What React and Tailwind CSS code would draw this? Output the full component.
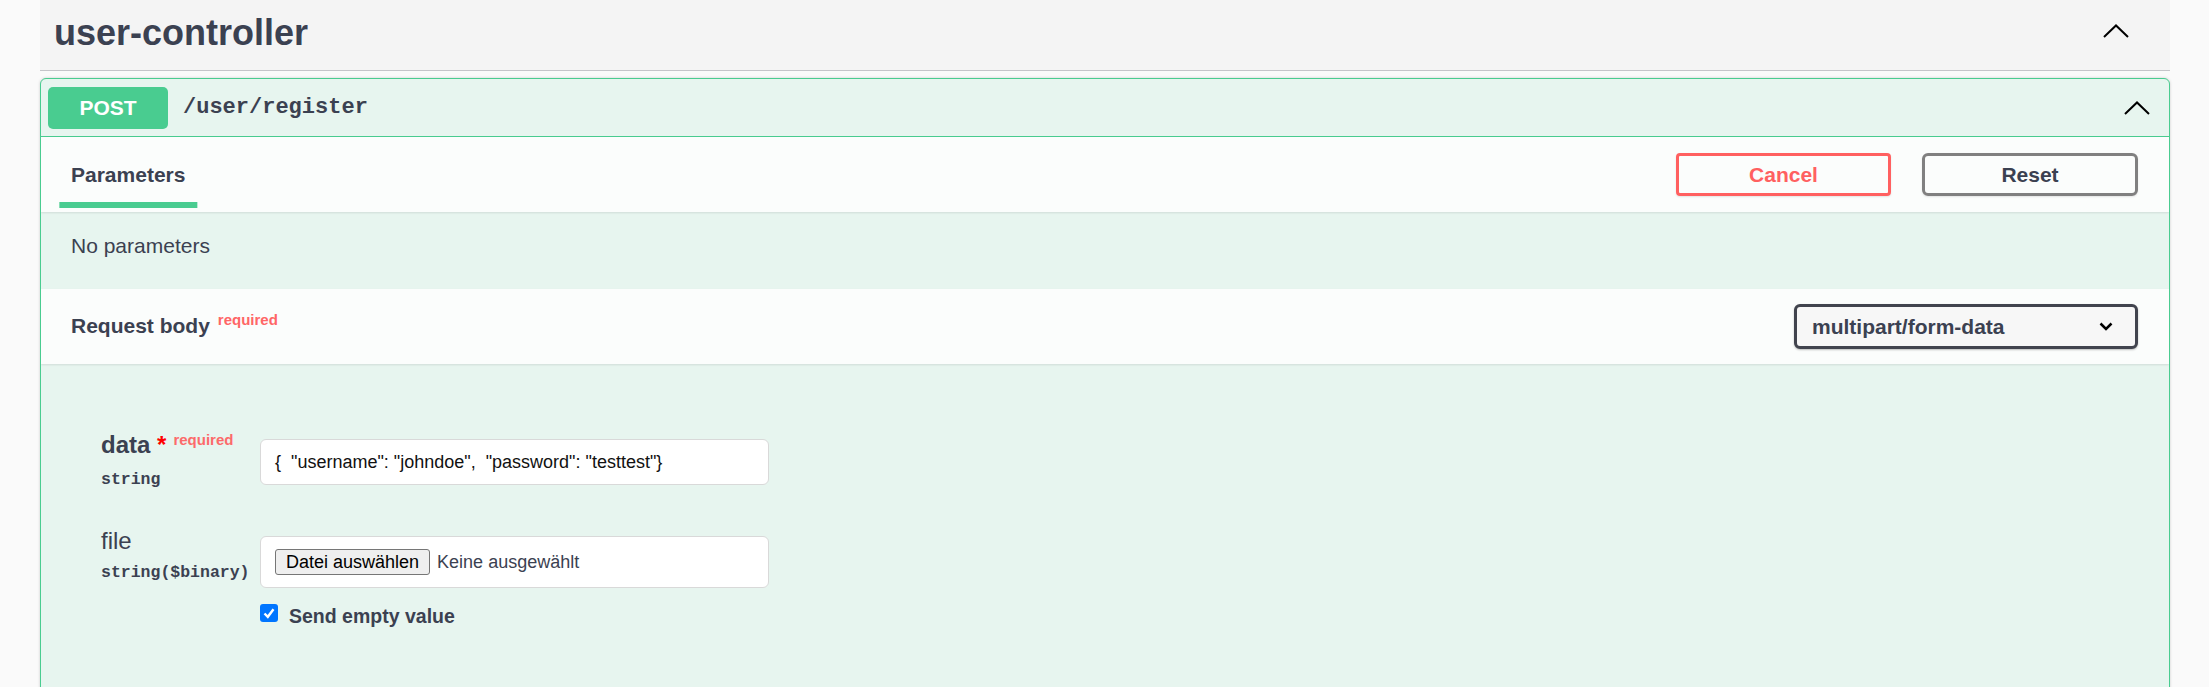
import React from 'react';

const Chevron = ({ className }) => (
  <svg width="26" height="14" viewBox="0 0 26 14" className={className}>
    <polyline points="1,13 13,1.5 25,13" fill="none" stroke="#000" strokeWidth="2" />
  </svg>
);

export default function App() {
  return (
    <div className="h-[687px] overflow-hidden bg-[#fafafa] font-['Liberation_Sans',Arial,sans-serif] text-[#3b4151]">
      <div className="ml-[40px] w-[2130px]">
        {/* tag header */}
        <div className="h-[71px] bg-[#f4f4f4] border-b border-[#c4c5c9] flex items-start justify-between pl-[14px] pt-[12px]">
          <h3 className="text-[36px] font-bold leading-[41px]">user-controller</h3>
          <Chevron className="mt-[12px] mr-[41px]" />
        </div>

        {/* operation block */}
        <div className="mt-[7px] h-[640px] border border-[#49cc90] rounded-[6px] bg-[#e7f5ef] shadow-[0_0_3px_rgba(0,0,0,0.19)] overflow-hidden">
          <div className="flex items-center pl-[7px] pr-[19px] pt-[8px] pb-[7px] border-b border-[#49cc90]">
            <span className="w-[120px] h-[42px] rounded-[5px] bg-[#49cc90] text-white font-bold text-[21px] flex items-center justify-center">POST</span>
            <span className="ml-[15px] font-['Liberation_Mono',monospace] font-bold text-[22px] leading-[26px]">/user/register</span>
            <Chevron className="ml-auto" />
          </div>

          {/* tab header */}
          <div className="relative h-[75px] bg-[#fbfdfc] shadow-[0_1px_2px_rgba(0,0,0,0.1)] flex items-center justify-between pl-[30px] pr-[31px]">
            <div className="relative">
              <h4 className="text-[21px] font-bold leading-[24px]">Parameters</h4>
              <div className="absolute left-1/2 -translate-x-1/2 top-[39px] w-[120%] h-[6px] bg-[#49cc90]" />
            </div>
            <div className="flex gap-[31px]">
              <button className="w-[215px] h-[43px] border-[3px] border-[#ff6060] rounded-[4px] text-[#ff6060] text-[21px] font-bold shadow-[0_1px_2px_rgba(0,0,0,0.1)]">Cancel</button>
              <button className="w-[216px] h-[43px] border-[3px] border-[#808080] rounded-[6px] text-[#3b4151] text-[21px] font-bold shadow-[0_1px_2px_rgba(0,0,0,0.1)]">Reset</button>
            </div>
          </div>

          <div className="h-[77px] pt-[22px] pl-[30px]">
            <p className="text-[21px] leading-[24px]">No parameters</p>
          </div>

          {/* request body header */}
          <div className="h-[75px] bg-[#fbfdfc] shadow-[0_1px_2px_rgba(0,0,0,0.1)] flex items-center justify-between pl-[30px] pr-[31px]">
            <h4 className="text-[21px] font-bold leading-[24px] whitespace-nowrap">
              Request body
              <span className="relative -top-[8px] ml-[8px] text-[15px] text-[#ff6666]">required</span>
            </h4>
            <div className="w-[344px] h-[45px] border-[3px] border-[#41444e] rounded-[6px] bg-[#f7f7f7] shadow-[0_1px_2px_rgba(0,0,0,0.25)] flex items-center justify-between pl-[15px] pr-[22px]">
              <span className="text-[21px] font-bold">multipart/form-data</span>
              <svg width="14" height="9" viewBox="0 0 14 9">
                <polyline points="1.5,1.5 7,7 12.5,1.5" fill="none" stroke="#000" strokeWidth="2.5" />
              </svg>
            </div>
          </div>

          {/* form fields */}
          <div className="pt-[69px] pl-[60px]">
            <div className="flex items-start">
              <div className="w-[159px]">
                <div className="text-[24px] leading-[24px] font-bold whitespace-nowrap">
                  data<span className="text-[#ff0000]">{'\u00a0'}*</span>
                  <span className="relative -top-[8px] ml-[7px] text-[15px] text-[#fc6a6a]">required</span>
                </div>
                <div className="mt-[10px] font-['Liberation_Mono',monospace] font-bold text-[16.5px] leading-[20px]">string</div>
              </div>
              <div className="mt-[6px] w-[509px] h-[46px] bg-white border border-[#d9d9d9] rounded-[6px] pl-[14px] flex items-center text-[18px] text-[#111] whitespace-pre">
                {'{  "username": "johndoe",  "password": "testtest"}'}
              </div>
            </div>

            <div className="mt-[39px] flex items-start">
              <div className="w-[159px]">
                <div className="text-[24px] leading-[24px]">file</div>
                <div className="mt-[10px] font-['Liberation_Mono',monospace] font-bold text-[16.5px] leading-[20px] whitespace-nowrap">string($binary)</div>
              </div>
              <div className="mt-[7px]">
                <div className="w-[509px] h-[52px] bg-white border border-[#d9d9d9] rounded-[6px] pl-[14px] flex items-center text-[18px]">
                  <span className="h-[26px] px-[10px] border border-[#767676] rounded-[3px] bg-[#efefef] text-black flex items-center leading-none">Datei auswählen</span>
                  <span className="ml-[7px]">Keine ausgewählt</span>
                </div>
                <div className="mt-[16px] flex items-start">
                  <svg width="18" height="18" viewBox="0 0 18 18">
                    <rect x="0" y="0" width="18" height="18" rx="3" fill="#0075ff" />
                    <polyline points="4.5,9.5 7.8,12.8 13.5,5.2" fill="none" stroke="#fff" strokeWidth="2.4" />
                  </svg>
                  <span className="ml-[11px] text-[19.5px] leading-[24px] font-bold">Send empty value</span>
                </div>
              </div>
            </div>
          </div>
        </div>
      </div>
    </div>
  );
}
